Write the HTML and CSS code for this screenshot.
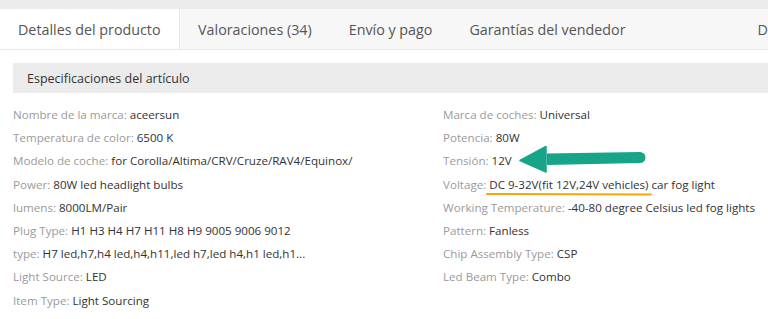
FILE: index.html
```html
<!DOCTYPE html>
<html lang="es">
<head>
<meta charset="utf-8">
<link rel="stylesheet" href="styles.css">
</head>
<body>
<div class="topstrip"></div>
<nav class="tabs">
  <div class="tab active">Detalles del producto</div>
  <div class="tab">Valoraciones (34)</div>
  <div class="tab">Envío y pago</div>
  <div class="tab">Garantías del vendedor</div>
  <div class="tab last">D</div>
</nav>
<section class="specs">
  <div class="spec-head">Especificaciones del artículo</div>
  <div class="spec-grid">
    <ul class="col left">
      <li><span class="k">Nombre de la marca:</span> <span class="v">aceersun</span></li>
      <li><span class="k">Temperatura de color:</span> <span class="v">6500 K</span></li>
      <li><span class="k">Modelo de coche:</span> <span class="v">for Corolla/Altima/CRV/Cruze/RAV4/Equinox/</span></li>
      <li><span class="k">Power:</span> <span class="v">80W led headlight bulbs</span></li>
      <li><span class="k">lumens:</span> <span class="v">8000LM/Pair</span></li>
      <li><span class="k">Plug Type:</span> <span class="v">H1 H3 H4 H7 H11 H8 H9 9005 9006 9012</span></li>
      <li><span class="k">type:</span> <span class="v">H7 led,h7,h4 led,h4,h11,led h7,led h4,h1 led,h1...</span></li>
      <li><span class="k">Light Source:</span> <span class="v">LED</span></li>
      <li><span class="k">Item Type:</span> <span class="v">Light Sourcing</span></li>
    </ul>
    <ul class="col right">
      <li><span class="k">Marca de coches:</span> <span class="v">Universal</span></li>
      <li><span class="k">Potencia:</span> <span class="v">80W</span></li>
      <li><span class="k">Tensión:</span> <span class="v">12V</span></li>
      <li><span class="k">Voltage:</span> <span class="v">DC 9-32V(fit 12V,24V vehicles) car fog light</span></li>
      <li><span class="k">Working Temperature:</span> <span class="v">-40-80 degree Celsius led fog lights</span></li>
      <li><span class="k">Pattern:</span> <span class="v">Fanless</span></li>
      <li><span class="k">Chip Assembly Type:</span> <span class="v">CSP</span></li>
      <li><span class="k">Led Beam Type:</span> <span class="v">Combo</span></li>
    </ul>
  </div>
  <svg class="annot" width="768" height="319" viewBox="0 0 768 319">
    <path d="M547 153.5 L640 152 A5.5 5.5 0 0 1 640 163 L547 165 Z" fill="#18a488"/>
    <path d="M520 160.5 L546 146.5 L546 172 Z" fill="#18a488" stroke="#18a488" stroke-width="1.5" stroke-linejoin="round"/>
    <path d="M487 194 L651 194.5" stroke="#f5a70a" stroke-width="2" stroke-linecap="round"/>
  </svg>
</section>
</body>
</html>
```

FILE: styles.css
```css
* { box-sizing: border-box; }
html, body { margin: 0; padding: 0; background: #fff; }
body {
  font-family: "Open Sans", "Liberation Sans", sans-serif;
  width: 768px;
  height: 319px;
  overflow: hidden;
  position: relative;
}
.topstrip { height: 9px; background: #ebebeb; }
.tabs {
  display: flex;
  height: 41px;
  background: #f7f7f7;
  border-bottom: 1px solid #e8e8e8;
  white-space: nowrap;
  overflow: hidden;
}
.tab {
  padding: 1px 19px 0 18px;
  font-size: 14.3px;
  line-height: 40px;
  color: #555;
  flex: none;
}
.tab.active {
  background: #fff;
  border-right: 1px solid #e8e8e8;
  height: 41px;
  padding-right: 18.5px;
}
.tab.last { padding-left: 113px; padding-right: 0; }
.spec-head {
  margin: 13px 0 0 13px;
  height: 30px;
  background: #ebebeb;
  padding-left: 14px;
  font-size: 12.5px;
  line-height: 31px;
  color: #333;
}
.spec-grid {
  display: grid;
  grid-template-columns: 430px 1fr;
  padding-left: 13px;
  margin-top: 10px;
}
.col { list-style: none; margin: 0; padding: 0; }
.col li {
  font-size: 11.6px;
  line-height: 23.2px;
  white-space: nowrap;
}
.k { color: #9a9a9a; }
.v { color: #333; }
.annot { position: absolute; left: 0; top: 0; pointer-events: none; }
```
